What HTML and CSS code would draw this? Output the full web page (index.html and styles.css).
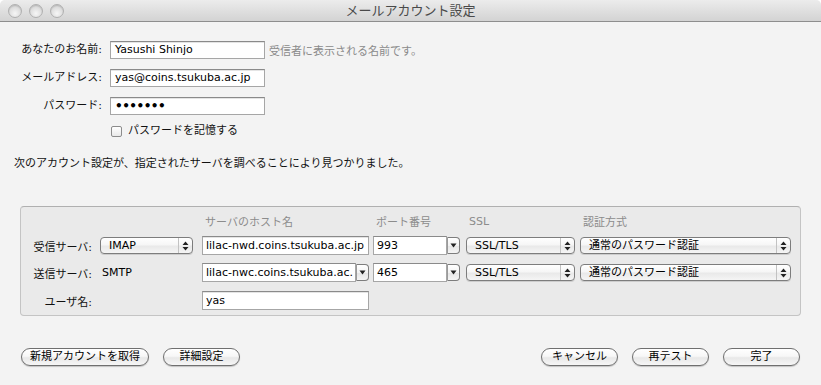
FILE: index.html
```html
<!DOCTYPE html>
<html lang="ja">
<head>
<meta charset="utf-8">
<link rel="stylesheet" href="styles.css">
</head>
<body>
<div class="window">
  <div class="titlebar">
    <div class="lights"><span class="light"></span><span class="light"></span><span class="light"></span></div>
    <div class="title">メールアカウント設定</div>
  </div>
  <div class="content">
    <div class="form">
      <div class="lbl">あなたのお名前:</div><div class="field">Yasushi Shinjo</div><div class="hint">受信者に表示される名前です。</div>
      <div class="lbl">メールアドレス:</div><div class="field">yas@coins.tsukuba.ac.jp</div><div></div>
      <div class="lbl">パスワード:</div><div class="field pw">•••••••</div><div></div>
      <div></div><div class="check"><span class="cbox"></span>パスワードを記憶する</div><div></div>
    </div>
    <p class="msg">次のアカウント設定が、指定されたサーバを調べることにより見つかりました。</p>
    <div class="group">
      <div></div><div></div>
      <div class="colhead">サーバのホスト名</div>
      <div class="colhead">ポート番号</div>
      <div class="colhead">SSL</div>
      <div class="colhead">認証方式</div>

      <div class="glbl">受信サーバ:</div>
      <div><div class="popup w-type"><span class="ptext">IMAP</span><span class="parrows"><svg width="7" height="10" viewBox="0 0 7 10"><path d="M3.5 0.5 L6.5 4 L0.5 4 Z M0.5 6 L6.5 6 L3.5 9.5 Z" fill="#222"/></svg></span></div></div>
      <div><div class="field w-host">lilac-nwd.coins.tsukuba.ac.jp</div></div>
      <div><div class="combo w-port"><span class="ctext">993</span><span class="cbtn"><svg width="7" height="5" viewBox="0 0 7 5"><path d="M0.5 0.5 L6.5 0.5 L3.5 4.5 Z" fill="#222"/></svg></span></div></div>
      <div><div class="popup w-ssl"><span class="ptext">SSL/TLS</span><span class="parrows"><svg width="7" height="10" viewBox="0 0 7 10"><path d="M3.5 0.5 L6.5 4 L0.5 4 Z M0.5 6 L6.5 6 L3.5 9.5 Z" fill="#222"/></svg></span></div></div>
      <div><div class="popup w-auth"><span class="ptext">通常のパスワード認証</span><span class="parrows"><svg width="7" height="10" viewBox="0 0 7 10"><path d="M3.5 0.5 L6.5 4 L0.5 4 Z M0.5 6 L6.5 6 L3.5 9.5 Z" fill="#222"/></svg></span></div></div>

      <div class="glbl">送信サーバ:</div>
      <div class="plain">SMTP</div>
      <div><div class="combo w-host"><span class="ctext">lilac-nwc.coins.tsukuba.ac.</span><span class="cbtn"><svg width="7" height="5" viewBox="0 0 7 5"><path d="M0.5 0.5 L6.5 0.5 L3.5 4.5 Z" fill="#222"/></svg></span></div></div>
      <div><div class="combo w-port"><span class="ctext">465</span><span class="cbtn"><svg width="7" height="5" viewBox="0 0 7 5"><path d="M0.5 0.5 L6.5 0.5 L3.5 4.5 Z" fill="#222"/></svg></span></div></div>
      <div><div class="popup w-ssl"><span class="ptext">SSL/TLS</span><span class="parrows"><svg width="7" height="10" viewBox="0 0 7 10"><path d="M3.5 0.5 L6.5 4 L0.5 4 Z M0.5 6 L6.5 6 L3.5 9.5 Z" fill="#222"/></svg></span></div></div>
      <div><div class="popup w-auth"><span class="ptext">通常のパスワード認証</span><span class="parrows"><svg width="7" height="10" viewBox="0 0 7 10"><path d="M3.5 0.5 L6.5 4 L0.5 4 Z M0.5 6 L6.5 6 L3.5 9.5 Z" fill="#222"/></svg></span></div></div>

      <div class="glbl">ユーザ名:</div>
      <div></div>
      <div><div class="field w-host">yas</div></div>
      <div></div><div></div><div></div>
    </div>
    <div class="buttons">
      <div class="bgroup">
        <button class="btn w-new">新規アカウントを取得</button>
        <button class="btn">詳細設定</button>
      </div>
      <div class="bgroup">
        <button class="btn">キャンセル</button>
        <button class="btn">再テスト</button>
        <button class="btn">完了</button>
      </div>
    </div>
  </div>
</div>
</body>
</html>
```
FILE: styles.css
```css
* { box-sizing: border-box; }
html, body { margin: 0; padding: 0; background: #ffffff; }
body {
  font-family: "DejaVu Sans", "Noto Sans CJK JP", sans-serif;
  font-size: 11px;
  color: #111;
}
.window {
  width: 821px;
  height: 385px;
  background: #f3f3f3;
  border-radius: 5px 5px 0 0;
  overflow: hidden;
}
.titlebar {
  height: 22px;
  background: linear-gradient(#ececec, #d3d3d3);
  border-bottom: 1px solid #8e8e8e;
  display: flex;
  align-items: center;
  position: relative;
}
.lights {
  display: flex;
  gap: 7px;
  padding-left: 8px;
}
.light {
  width: 14px;
  height: 14px;
  border-radius: 50%;
  border: 1px solid #b0b0b0;
  background: radial-gradient(circle at 50% 70%, #f6f6f6 0%, #dedede 55%, #c6c6c6 100%);
  box-shadow: inset 0 1px 1px rgba(0,0,0,0.12);
}
.title {
  position: absolute;
  left: 0; right: 0; top: 0;
  height: 21px;
  line-height: 21px;
  text-align: center;
  font-size: 13px;
  color: #4a4a4a;
}
.content {
  padding: 19px 21px 0 0;
}
.form {
  display: grid;
  grid-template-columns: 106px 155px auto;
  column-gap: 4px;
  row-gap: 10px;
  align-items: center;
}
.lbl {
  text-align: right;
  padding-right: 4px;
  line-height: 18px;
}
.field {
  height: 18px;
  line-height: 16px;
  background: #fff;
  border: 1px solid #a6a6a6;
  border-top-color: #8a8a8a;
  box-shadow: inset 0 1px 0 #e4e4e4;
  padding: 0 4px;
  white-space: nowrap;
  overflow: hidden;
  color: #000;
}
.pw { font-size: 12px; font-weight: bold; letter-spacing: -0.5px; }
.hint { color: #8a8a8a; }
.check {
  display: flex;
  align-items: center;
  gap: 6px;
  line-height: 14px;
  margin-top: -1px;
}
.cbox {
  width: 11px;
  height: 11px;
  border: 1px solid #8c8c8c;
  border-radius: 2px;
  background: linear-gradient(#ffffff, #e9e9e9);
  margin-left: 1px;
}
.msg {
  margin: 19px 0 0 14px;
  line-height: 14px;
}
.group {
  margin: 35px 0 0 20px;
  width: 781px;
  height: 110px;
  background: #eaeaea;
  border: 1px solid #c4c4c4;
  border-top-color: #b0b0b0;
  border-radius: 4px;
  display: grid;
  grid-template-columns: 79px 102px 171px 93px 114px 211px;
  grid-template-rows: 14px 19px 19px 19px;
  row-gap: 8px;
  padding: 7px 0 0 0;
  align-items: center;
}
.group > :nth-last-child(-n+6) { margin-top: 2px; }
.colhead { color: #8c8c8c; padding-left: 3px; }
.glbl { text-align: right; padding-right: 8px; white-space: nowrap; }
.plain { padding-left: 2px; color: #000; }
.w-type { width: 93px; }
.w-host { width: 167px; }
.w-port { width: 87px; }
.w-ssl { width: 109px; }
.w-auth { width: 211px; }
.group .field { height: 19px; line-height: 17px; padding-left: 3px; }
.popup {
  height: 17px;
  display: flex;
  align-items: stretch;
  border: 1px solid #7d7d7d;
  border-radius: 4px;
  background: linear-gradient(#ffffff 0%, #f6f6f6 45%, #e9e9e9 55%, #f5f5f5 100%);
  box-shadow: 0 1px 0 rgba(0,0,0,0.12);
}
.ptext {
  flex: 1;
  padding-left: 8px;
  line-height: 15px;
  color: #000;
  white-space: nowrap;
  overflow: hidden;
}
.parrows {
  width: 14px;
  border-left: 1px solid #c2c2c2;
  display: flex;
  align-items: center;
  justify-content: center;
}
.combo {
  height: 19px;
  display: flex;
}
.ctext {
  flex: 1;
  background: #fff;
  border: 1px solid #a6a6a6;
  border-top-color: #8a8a8a;
  line-height: 17px;
  padding-left: 3px;
  white-space: nowrap;
  overflow: hidden;
  color: #000;
}
.cbtn {
  width: 13px;
  margin: 1px 0;
  border: 1px solid #7d7d7d;
  border-left: 1px solid #9a9a9a;
  border-radius: 0 4px 4px 0;
  background: linear-gradient(#ffffff 0%, #f3f3f3 50%, #e6e6e6 55%, #f5f5f5 100%);
  display: flex;
  align-items: center;
  justify-content: center;
}
.buttons {
  margin-top: 32px;
  padding-left: 21px;
  display: flex;
  justify-content: space-between;
}
.bgroup { display: flex; gap: 14px; }
.btn {
  width: 77px;
  height: 18px;
  padding: 0;
  font: inherit;
  color: #000;
  border: 1px solid #6f6f6f;
  border-radius: 9px;
  background: linear-gradient(#ffffff 0%, #f7f7f7 45%, #e8e8e8 55%, #f6f6f6 100%);
  box-shadow: 0 1px 1px rgba(0,0,0,0.2);
  line-height: 16px;
  text-align: center;
}
.w-new { width: 128px; }
```
